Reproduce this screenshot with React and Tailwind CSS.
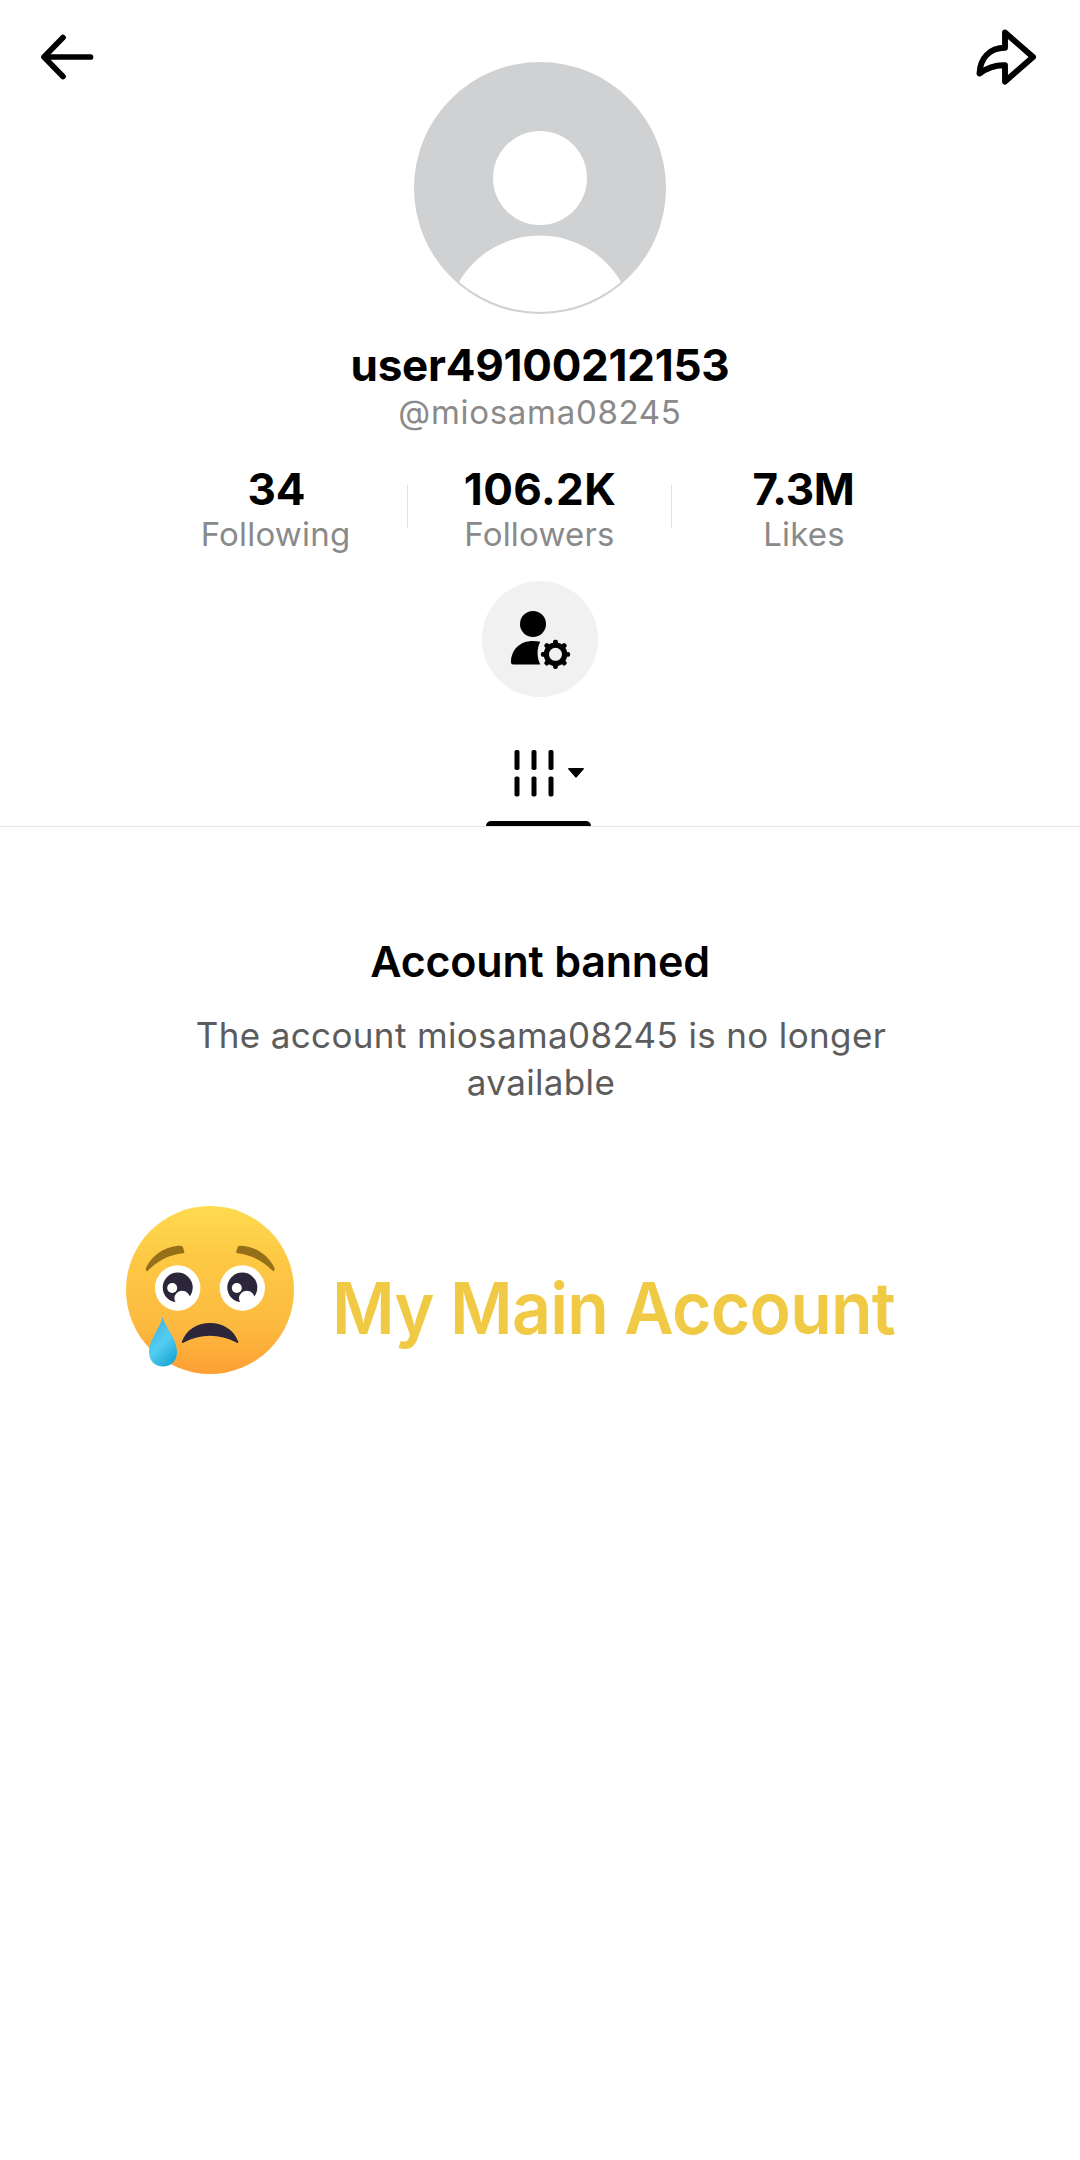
import React from "react";

const stats = [
  { value: "34", label: "Following", valueClass: "pl-[2px]", labelClass: "tracking-[0.2px]" },
  { value: "106.2K", label: "Followers", valueClass: "tracking-[0.4px] pl-[1px]", labelClass: "tracking-[0.2px]" },
  { value: "7.3M", label: "Likes", valueClass: "tracking-[-0.3px]", labelClass: "tracking-[0.2px] pl-[1px]" },
];

function BackIcon() {
  return (
    <svg className="w-[60px] h-[60px]" viewBox="0 0 60 60" fill="none">
      <path
        d="M27 10.500 8 30l19 19.500M9 30h45.500"
        stroke="#000"
        strokeWidth="5.7"
        strokeLinecap="round"
        strokeLinejoin="round"
      />
    </svg>
  );
}

function ShareIcon() {
  return (
    <svg className="w-[70px] h-[60px]" viewBox="0 0 70 60" fill="none">
      <path
        d="M35 5.500 63 30 35 54.500V38.300C25 37.800 17 41 9.500 46.500 10 31.500 19.500 20.800 35 20.800Z"
        stroke="#000"
        strokeWidth="5.9"
        strokeLinejoin="round"
      />
    </svg>
  );
}

function Avatar() {
  return (
    <svg className="w-[252px] h-[252px]" viewBox="0 0 252 252">
      <defs>
        <clipPath id="avatar-clip">
          <circle cx="126" cy="126" r="124" />
        </clipPath>
      </defs>
      <circle cx="126" cy="126" r="126" fill="#d0d1d3" />
      <circle cx="126" cy="116" r="47" fill="#fff" />
      <circle cx="126" cy="267.500" r="94" fill="#fff" clipPath="url(#avatar-clip)" />
    </svg>
  );
}

function UserGearIcon() {
  return (
    <svg className="w-[116px] h-[116px]" viewBox="0 0 116 116">
      <circle cx="51" cy="43" r="13" fill="#000" />
      <path d="M29 81.500c0-13 9-21.500 22-21.500q4 0 7.300.8c-3.600 6.500-3.600 16 0 22.700H31q-2 0-2-2Z" fill="#000" />
      <g transform="translate(73.500 73.300)">
        {[0, 45, 90, 135].map((angle) => (
          <rect
            key={angle}
            x="-2.400"
            y="-14.600"
            width="4.800"
            height="29.200"
            rx="1.800"
            fill="#000"
            transform={`rotate(${angle})`}
          />
        ))}
        <circle r="11.800" fill="#000" />
        <circle r="6.500" fill="#f1f1f1" />
      </g>
    </svg>
  );
}

function GridIcon() {
  return (
    <svg className="w-[40px] h-[48px]" viewBox="0 0 40 48">
      {[3, 20, 37].map((x) => (
        <g key={x}>
          <rect x={x - 2.5} y="1" width="5" height="20" rx="1.800" />
          <rect x={x - 2.5} y="27.500" width="5" height="20" rx="1.800" />
        </g>
      ))}
    </svg>
  );
}

function SadFace() {
  return (
    <svg className="w-[168px] h-[168px] shrink-0" viewBox="0 0 168 168">
      <defs>
        <linearGradient id="face" x1="0" y1="0" x2="0" y2="1">
          <stop offset="0" stopColor="#fedb50" />
          <stop offset="0.3" stopColor="#fdc944" />
          <stop offset="0.7" stopColor="#fcbb40" />
          <stop offset="1" stopColor="#fd9f34" />
        </linearGradient>
        <linearGradient id="tear" x1="0.2" y1="0" x2="0.8" y2="1">
          <stop offset="0" stopColor="#36b3dc" />
          <stop offset="0.5" stopColor="#55cdf3" />
          <stop offset="1" stopColor="#16a3d3" />
        </linearGradient>
      </defs>
      <circle cx="84" cy="84" r="84" fill="url(#face)" />
      <g fill="#957018">
        <path d="M20 62C26 49 40 39.700 54.500 39.700q2 0 2.500 1.800l1.300 4.200q.4 1.600-1.300 1.600C43 49 32 54.500 21.500 65q-2 .8-1.500-3Z" />
        <path d="M148.500 62C142.500 49 128.500 39.700 114 39.700q-2 0-2.500 1.800l-1.300 4.200q-.4 1.600 1.300 1.600C125.500 49 136.500 54.500 147 65q2 .8 1.500-3Z" />
      </g>
      {[51.7, 116.3].map((x) => (
        <g key={x} transform={`translate(${x} 82)`}>
          <circle r="22.700" fill="#fff" />
          <circle r="15" cy="-0.500" fill="#2b2639" />
          <circle cx="-5.500" cy="0" r="5" fill="#fff" />
          <circle cx="4.500" cy="10.500" r="7.800" fill="#fff" />
        </g>
      ))}
      <path
        d="M56 135.500C60 124 71 117 84 117s24 7 28.200 18.500c.5 2-1 2-2.200.8C94 127.500 74 127.500 58.200 136.300 57 137.500 55.500 137.500 56 135.500Z"
        fill="#2b2639"
      />
      <path
        d="M36.500 111C39 121 51 133 51 146c0 9-6 14.500-14 14.500S23 155 23 146c0-13 10.500-22 13.500-35Z"
        fill="url(#tear)"
      />
    </svg>
  );
}

export default function App() {
  return (
    <div className="w-[1080px] h-[2160px] bg-white overflow-hidden font-['Inter',sans-serif] text-black">
      <header className="flex justify-between items-start pt-[27px] pl-[36px] pr-[40px]">
        <div className="w-[70px]">
          <BackIcon />
        </div>
        <div className="pt-[35px] pl-[4px]">
          <Avatar />
        </div>
        <ShareIcon />
      </header>

      <section className="flex flex-col items-center">
        <h1 className="mt-[27px] text-[44px] leading-[48px] font-bold tracking-[-0.25px]">
          user49100212153
        </h1>
        <p className="mt-[3px] text-[33px] leading-[40px] tracking-[0.7px] text-[#8a8a8a]">
          @miosama08245
        </p>

        <div className="mt-[35px] w-[792px] flex">
          {stats.map((stat, index) => (
            <React.Fragment key={stat.label}>
              {index > 0 && <div className="w-px h-[43px] mt-[18px] bg-[#e3e3e3]" />}
              <div className="w-[263px] flex flex-col items-center">
                <span className={`text-[44px] leading-[44px] font-bold ${stat.valueClass}`}>
                  {stat.value}
                </span>
                <span className={`mt-[3px] text-[33px] leading-[40px] text-[#8a8a8a] ${stat.labelClass}`}>
                  {stat.label}
                </span>
              </div>
            </React.Fragment>
          ))}
        </div>

        <button className="mt-[27px] w-[116px] h-[116px] rounded-full bg-[#f1f1f1]">
          <UserGearIcon />
        </button>
      </section>

      <nav className="h-[130px] flex flex-col items-center border-b border-[#e8e8e8]">
        <div className="mt-[52px] ml-[90px] w-[142px] h-[48px] flex items-center">
          <GridIcon />
          <svg className="ml-[14px] w-[16px] h-[10px]" viewBox="0 0 16 10">
            <path d="M1 0h14q1.500 0 .5 1.500L8.700 9.300q-.7.800-1.400 0L.5 1.500Q-.5 0 1 0Z" />
          </svg>
        </div>
        <div className="mt-[24px] mr-[3px] w-[105px] h-[5px] rounded-t-[5px] bg-black" />
      </nav>

      <section className="mt-[110px] flex flex-col items-center text-center">
        <h2 className="text-[43px] leading-[48px] font-semibold tracking-[-0.2px]">
          Account banned
        </h2>
        <p className="mt-[27px] w-[760px] pl-[2px] text-[35px] leading-[47px] tracking-[0.36px] text-[#5c5c5c]">
          The account miosama08245 is no longer
          <br />
          available
        </p>
      </section>

      <section className="mt-[100px] ml-[126px] flex items-start">
        <SadFace />
        <p className="mt-[62px] ml-[38px] origin-left scale-x-95 text-[71.5px] leading-[80px] font-semibold tracking-[-0.8px] text-[#f0ca45] whitespace-nowrap">
          My Main Account
        </p>
      </section>
    </div>
  );
}
